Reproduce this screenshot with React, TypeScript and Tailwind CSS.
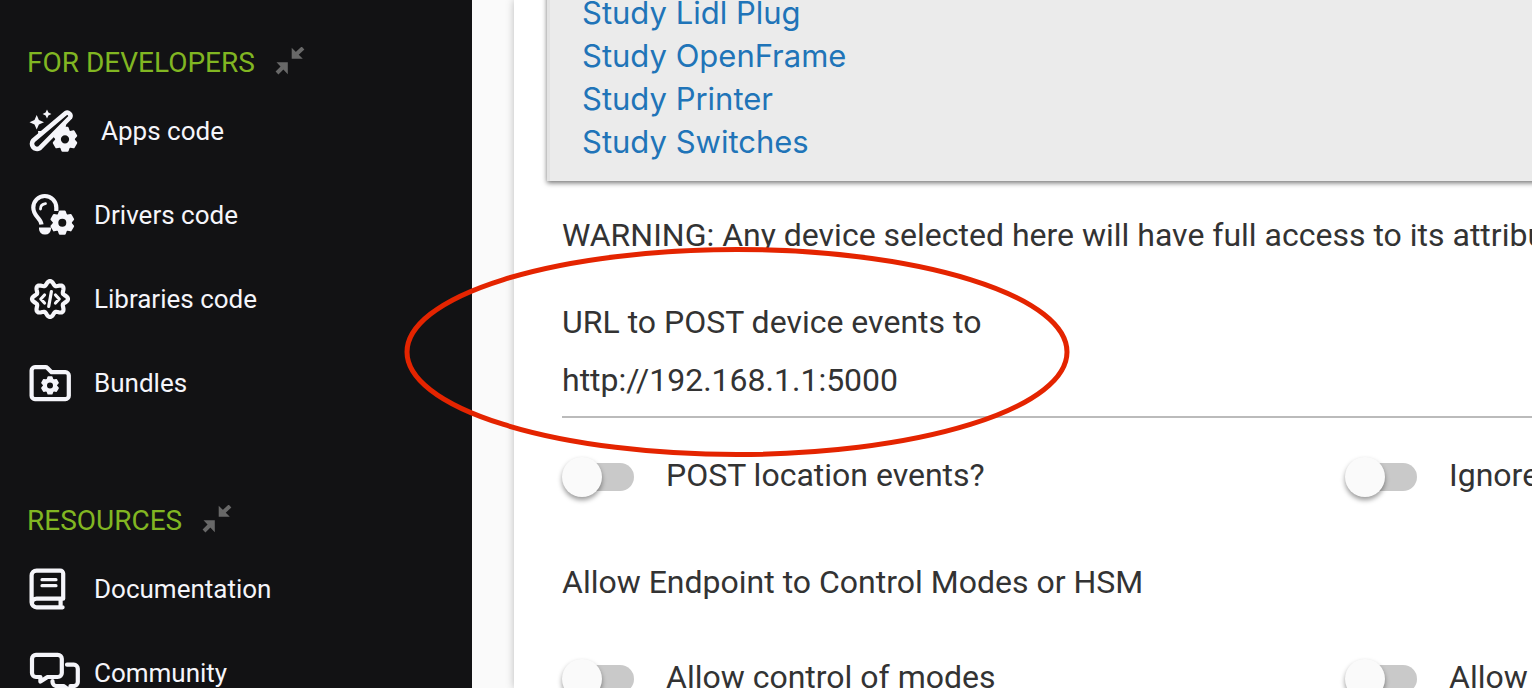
import type { ReactNode } from "react";

const devices = ["Study Lidl Plug", "Study OpenFrame", "Study Printer", "Study Switches"];

// outline of the eight-lobed badge behind the code brackets
const badge =
  Array.from({ length: 96 }, (_, i) => {
    const a = (i / 96) * Math.PI * 2;
    const r = 16 + 2 * Math.cos(8 * a);
    return `${i ? "L" : "M"}${(26 + r * Math.cos(a)).toFixed(2)} ${(28 + r * Math.sin(a)).toFixed(2)}`;
  }).join("") + "Z";

function Gear({ x, y, r }: { x: number; y: number; r: number }) {
  return (
    <g transform={`translate(${x} ${y}) scale(${r / 12})`}>
      <circle r="6.7" fill="none" stroke="currentColor" strokeWidth="5.4" />
      {[0, 60, 120, 180, 240, 300].map((a) => (
        <path
          key={a}
          d="M-2.4 -11 H2.4 L3.8 -7 H-3.8 Z"
          transform={`rotate(${a})`}
          fill="currentColor"
          stroke="currentColor"
          strokeWidth="2.2"
          strokeLinejoin="round"
        />
      ))}
    </g>
  );
}

function Icon({ children }: { children: ReactNode }) {
  return (
    <svg
      viewBox="0 0 60 56"
      className="h-14 w-[60px] shrink-0"
      fill="none"
      stroke="currentColor"
      strokeWidth="4.2"
      strokeLinecap="round"
      strokeLinejoin="round"
      aria-hidden="true"
    >
      {children}
    </svg>
  );
}

function AppsIcon() {
  return (
    <Icon>
      <path d="M14 28 H22 L15 36 Z M36 24 L42.5 20 L41 27 L36 30 Z" fill="currentColor" stroke="none" />
      <Gear x={41} y={36.3} r={12.4} />
      <path d="M41.5 10.2 L9.2 37.5 A5.1 5.1 0 0 0 15.5 45.3 L46 14.5 A3.2 3.2 0 0 0 41.5 10.2 Z" fill="#121214" strokeWidth="4.6" />
      <g fill="currentColor" stroke="none">
        <path d="M12.7 12 L14.9 17.1 L20 19.3 L14.9 21.5 L12.7 26.5 L10.5 21.5 L5.5 19.3 L10.5 17.1 Z" />
        <path d="M23 6.6 L24.4 9.6 L27.4 11 L24.4 12.4 L23 15.4 L21.6 12.4 L18.6 11 L21.6 9.6 Z" />
      </g>
    </Icon>
  );
}

function DriversIcon() {
  return (
    <Icon>
      <path d="M17.5 37.5 C17 30.5 9.3 30 9.3 20.5 A11.5 11.5 0 0 1 32.3 20.5 V24" strokeLinecap="butt" />
      <path d="M16.5 22 C16.5 19 18.5 17 21.5 16.7" strokeWidth="2.8" />
      <path d="M15 40.5 H27 V42 A5.6 5.6 0 0 1 21.4 47.5 H20.6 A5.6 5.6 0 0 1 15 42 Z" fill="currentColor" stroke="none" />
      <Gear x={38.3} y={35.7} r={12} />
    </Icon>
  );
}

function LibrariesIcon() {
  return (
    <Icon>
      <path d={badge} />
      <path d="M20.5 24 L16.8 28 L20.5 32 M31.5 24 L35.2 28 L31.5 32 M27.4 20.5 L24.7 35.5" strokeWidth="3.2" />
    </Icon>
  );
}

function BundlesIcon() {
  return (
    <Icon>
      <path d="M11 12.2 H21.5 Q22.6 12.2 23.4 13 L27.6 17.2 H41.4 A3.4 3.4 0 0 1 44.8 20.6 V40.7 A3.4 3.4 0 0 1 41.4 44.1 H11 A3.4 3.4 0 0 1 7.6 40.7 V15.6 A3.4 3.4 0 0 1 11 12.2 Z" />
      <Gear x={26} y={30.4} r={9} />
    </Icon>
  );
}

function BookIcon() {
  return (
    <Icon>
      <path d="M38.6 46.3 H12.6 A5 5 0 0 1 7.6 41.3 V14.6 A5 5 0 0 1 12.6 9.6 H36.2 A3 3 0 0 1 39.2 12.6 V37.7 H12.6 A4.8 4.8 0 0 0 7.8 42 M36.6 38 V46" />
      <path d="M18 18.7 H32 M18 24.7 H32" strokeWidth="3.2" />
    </Icon>
  );
}

function CommunityIcon() {
  return (
    <Icon>
      <path d="M12 9.8 H33.8 A4 4 0 0 1 37.8 13.8 V28 A4 4 0 0 1 33.8 32 H23.5 L16.4 36.6 V32 H12 A4 4 0 0 1 8 28 V13.8 A4 4 0 0 1 12 9.8 Z" />
      <path d="M43 19.7 H49.8 A4 4 0 0 1 53.8 23.7 V37 A4 4 0 0 1 49.8 41 H46.5 V46 L39.5 41 H32.5 A4 4 0 0 1 28.5 37 V36" />
    </Icon>
  );
}

function NavHeading({ children }: { children: ReactNode }) {
  return (
    <div className="flex h-[54px] items-center gap-5 pt-[2px] pl-[27px]">
      <h2 className="text-[28px] leading-8 text-[#81b622]">{children}</h2>
      <button type="button" aria-label="Collapse section" className="pb-1 text-[#686868]">
        <svg viewBox="0 0 30 28" className="h-7 w-[30px]" fill="currentColor" stroke="currentColor" aria-hidden="true">
          <path d="M16.7 .7 L27.8 11.8 H16.7 Z M12.8 27.3 V15.3 H1.5 Z" stroke="none" />
          <path d="M21 7.5 L28 1 M8.5 19.5 L2 26" strokeWidth="4" />
        </svg>
      </button>
    </div>
  );
}

function NavItem({ icon, children }: { icon: ReactNode; children: ReactNode }) {
  return (
    <li>
      <a href="#" className="flex h-[84px] items-center gap-[10px] pl-6 text-[26px] leading-8 text-[#f5f5fa]">
        {icon}
        {children}
      </a>
    </li>
  );
}

function Toggle({ label }: { label: string }) {
  return (
    <label className="flex h-10 items-center gap-8 whitespace-nowrap">
      <input type="checkbox" role="switch" className="peer sr-only" />
      <span className="flex h-7 w-[72px] shrink-0 items-center rounded-full bg-[#c9c9c9] bg-clip-content pl-1 peer-checked:justify-end">
        <span className="-ml-1 size-10 rounded-full bg-[#fafafa] shadow-[0_3px_5px_rgba(0,0,0,0.4)]" />
      </span>
      <span className="pb-1">{label}</span>
    </label>
  );
}

export default function App() {
  return (
    <div className="relative flex h-screen overflow-hidden bg-[#fafafa] font-[Roboto,sans-serif]">
      <nav className="w-[472px] shrink-0 bg-[#121214] pt-[35px]">
        <NavHeading>FOR DEVELOPERS</NavHeading>
        <ul className="mb-[68px]">
          <NavItem icon={<AppsIcon />}>
            <span className="pl-[7px]">Apps code</span>
          </NavItem>
          <NavItem icon={<DriversIcon />}>Drivers code</NavItem>
          <NavItem icon={<LibrariesIcon />}>Libraries code</NavItem>
          <NavItem icon={<BundlesIcon />}>Bundles</NavItem>
        </ul>
        <NavHeading>RESOURCES</NavHeading>
        <ul>
          <NavItem icon={<BookIcon />}>Documentation</NavItem>
          <NavItem icon={<CommunityIcon />}>Community</NavItem>
        </ul>
      </nav>

      <main className="min-w-0 flex-1 pl-[42px]">
        <div className="h-full overflow-hidden bg-white text-[32px] leading-10 text-[#333] shadow-[0_0_8px_rgba(0,0,0,0.25)]">
          <ul className="-mt-[9px] -mr-2 ml-[33px] border-l-[3px] border-[#e3e3e3] bg-[#ebebeb] pb-[18px] pl-8 font-[Inter,sans-serif] text-[31px] leading-[43px] shadow-[0_2px_5px_rgba(0,0,0,0.55)]">
            {devices.map((d) => (
              <li key={d}>
                <a href="#" className="text-[#2074b8]">
                  {d}
                </a>
              </li>
            ))}
          </ul>

          <form className="pl-12">
            <p className="mt-[34px] whitespace-nowrap">
              WARNING: Any device selected here will have full access to its attributes and commands
            </p>
            <label htmlFor="url" className="mt-[47px] block">
              URL to POST device events to
            </label>
            <input
              id="url"
              type="text"
              defaultValue="http://192.168.1.1:5000"
              className="block h-[76px] w-full border-b-2 border-[#bbb] pt-[2px] outline-none"
            />
            <div className="mt-[39px] grid grid-cols-[783fr_187fr]">
              <Toggle label="POST location events?" />
              <div className="w-0">
                <Toggle label="Ignore" />
              </div>
            </div>
            <h3 className="mt-[65px]">Allow Endpoint to Control Modes or HSM</h3>
            <div className="mt-[57px] grid grid-cols-[783fr_187fr]">
              <Toggle label="Allow control of modes" />
              <div className="w-0">
                <Toggle label="Allow" />
              </div>
            </div>
          </form>
        </div>
      </main>

      {/* red ring calling out the URL field */}
      <svg
        viewBox="0 0 668 212"
        className="pointer-events-none absolute top-[246px] left-[403px] h-[212px] w-[668px]"
        fill="none"
        stroke="#e42400"
        strokeWidth="5"
        aria-hidden="true"
      >
        <ellipse cx="334" cy="106" rx="330" ry="102.5" />
      </svg>
    </div>
  );
}
